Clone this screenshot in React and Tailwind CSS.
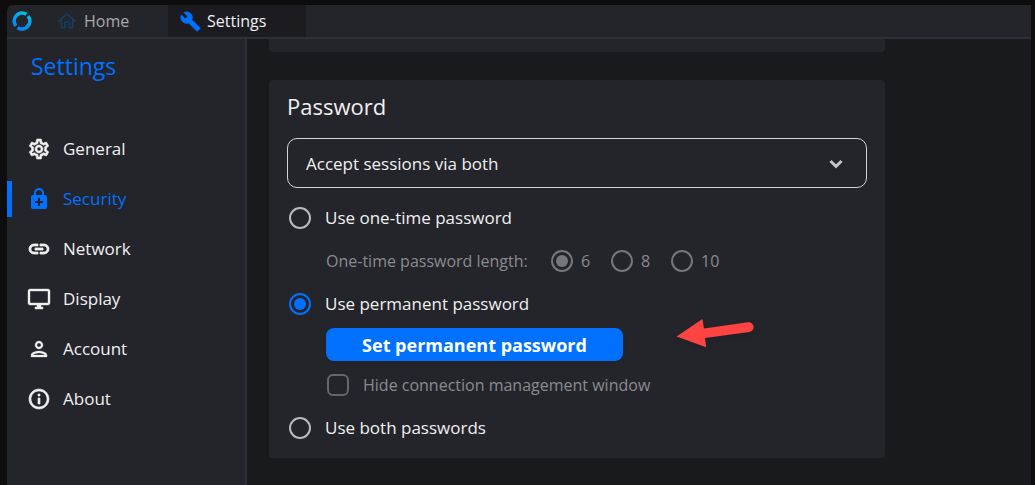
import { useState } from "react";
import {
  MdOutlineSettings,
  MdEnhancedEncryption,
  MdLink,
  MdOutlineDesktopWindows,
  MdOutlinePerson,
  MdInfoOutline,
  MdBuild,
} from "react-icons/md";

const sections = [
  { name: "General", Icon: MdOutlineSettings, weight: "stroke-[0.6]" },
  { name: "Security", Icon: MdEnhancedEncryption, weight: "stroke-0" },
  { name: "Network", Icon: MdLink, weight: "stroke-[0.8]" },
  { name: "Display", Icon: MdOutlineDesktopWindows, weight: "stroke-[0.4]" },
  { name: "Account", Icon: MdOutlinePerson, weight: "stroke-[0.3]" },
  { name: "About", Icon: MdInfoOutline, weight: "stroke-[0.6]" },
];

function Logo() {
  return (
    <svg viewBox="0 0 20 20" className="size-5" fill="none" aria-hidden="true">
      <defs>
        <linearGradient id="logo" x1="14" y1="2" x2="6" y2="18" gradientUnits="userSpaceOnUse">
          <stop stopColor="#00bfe1" />
          <stop offset="1" stopColor="#0083ff" />
        </linearGradient>
      </defs>
      <path d="M3.900 14.800A7.900 7.900 0 0 1 14.400 3.300" stroke="url(#logo)" strokeWidth="3.600" />
      <path d="M16.100 5.200A7.900 7.900 0 0 1 5.600 16.700" stroke="url(#logo)" strokeWidth="3.600" />
    </svg>
  );
}

function HomeIcon() {
  return (
    <svg viewBox="0 0 18 18" className="size-[18px]" fill="none" stroke="#173d63" strokeWidth="1.600" aria-hidden="true">
      <path d="M1 9.200 9 1.900l8 7.300M3.400 7.500v8.300h3.400v-4a2.200 2.200 0 0 1 4.400 0v4h3.400V7.500" strokeLinejoin="round" strokeLinecap="round" />
    </svg>
  );
}

function Radio(props) {
  return (
    <input
      type="radio"
      className="size-[22px] shrink-0 appearance-none rounded-full border-2 border-[#bababc] bg-clip-content p-[3px] checked:border-[#0071ff] checked:bg-[#0071ff] disabled:border-[#77777b] disabled:checked:bg-[#77777b]"
      {...props}
    />
  );
}

export default function App() {
  const [section, setSection] = useState("Security");
  const [mode, setMode] = useState("permanent");

  return (
    <div className="flex min-h-screen flex-col bg-[#0d0d0d] pt-[5px] pr-1 pl-[7px] font-['Open_Sans','Noto_Sans',sans-serif] text-[17px] leading-6 text-[#f0f0f1]">
      <header className="flex h-[34px] items-stretch rounded-tl-md border-b-2 border-[#2f3036] bg-[#24252b]">
        <div className="flex w-10 items-center pl-[5px]">
          <Logo />
        </div>
        <nav className="flex text-base">
          <a href="#home" className="flex w-[121px] items-center gap-2 pl-[11px] text-[#a9a9ab]">
            <HomeIcon />
            Home
          </a>
          <a href="#settings" className="flex w-[138px] items-center gap-1.5 bg-[#1c1b20] pl-3">
            <MdBuild className="size-[21px] stroke-1 text-[#0071ff] [&>[fill=none]]:hidden" />
            Settings
          </a>
        </nav>
      </header>

      <div className="flex grow">
        <aside className="w-60 shrink-0 border-r-2 border-[#2f3036] bg-[#24252b]">
          <h1 className="pt-[11px] pl-6 text-[23px] leading-8 text-[#0071ff]">Settings</h1>
          <nav className="mt-[42px]">
            {sections.map(({ name, Icon, weight }) => {
              const active = name === section;
              return (
                <button
                  key={name}
                  type="button"
                  onClick={() => setSection(name)}
                  className={"flex h-[50px] w-full items-center gap-[15px] " + (active ? "text-[#0071ff]" : "")}
                >
                  <span className={"h-9 w-[5px] " + (active ? "bg-[#0071ff]" : "")} />
                  <span className="flex items-center gap-3">
                    <Icon className={"size-6 [&>[fill=none]]:hidden " + weight} />
                    {name}
                  </span>
                </button>
              );
            })}
          </nav>
        </aside>

        <main className="grow bg-[#191a1e] pr-[146px] pl-[22px]">
          <section className="h-[13px] rounded-b bg-[#24252b]" />

          <section className="relative mt-7 rounded bg-[#24252b] px-[18px] pt-2.5 pb-2">
            <h2 className="text-[22px] leading-8">Password</h2>
            <div className="relative mt-4">
              <select
                aria-label="Password access"
                className="block h-[50px] w-full appearance-none rounded-[10px] border border-[#d4d4d5] bg-transparent pt-0.5 pl-[18px]"
              >
                <option>Accept sessions via both</option>
              </select>
              <svg viewBox="0 0 14 10" className="pointer-events-none absolute top-[21px] right-6 h-2.5 w-3.5" fill="none" stroke="#c4c4c6" strokeWidth="3" aria-hidden="true">
                <path d="m1.500 2 5.500 5.400L12.500 2" />
              </svg>
            </div>

            <div className="mt-2">
              <label className="flex h-[43px] items-center gap-3.5 pl-0.5">
                <Radio name="mode" checked={mode === "once"} onChange={() => setMode("once")} />
                Use one-time password
              </label>

              <fieldset disabled aria-labelledby="length-label" className="flex h-[43px] items-center pl-[39px] text-base text-[#8b8b8e]">
                <span id="length-label" className="w-[225px]">One-time password length:</span>
                {["6", "8", "10"].map((n) => (
                  <label key={n} className="flex w-[60px] items-center gap-2">
                    <Radio name="length" defaultChecked={n === "6"} />
                    {n}
                  </label>
                ))}
              </fieldset>

              <label className="flex h-[43px] items-center gap-3.5 pl-0.5">
                <Radio name="mode" checked={mode === "permanent"} onChange={() => setMode("permanent")} />
                Use permanent password
              </label>

              <div className="py-[3px] pl-[39px]">
                <button type="button" className="block h-[33px] w-[297px] rounded-lg bg-[#0071ff] text-lg font-bold text-white shadow">
                  Set permanent password
                </button>
              </div>

              <label className="flex h-[42px] items-center gap-3.5 pl-10 text-base text-[#8b8b8e]">
                <input type="checkbox" disabled className="size-[22px] appearance-none rounded-md border-2 border-[#66666a]" />
                Hide connection management window
              </label>

              <label className="mb-px flex h-[43px] items-center gap-3.5 pl-0.5">
                <Radio name="mode" checked={mode === "both"} onChange={() => setMode("both")} />
                Use both passwords
              </label>
            </div>

            <svg viewBox="0 0 84 40" className="absolute top-[234px] left-[405px] h-10 w-[84px] drop-shadow-md" aria-hidden="true">
              <path d="M2.500 22.500 28.500 5l1.400 9.500L74 8.200a4.900 4.900 0 0 1 1.400 9.700L31 24l1.200 9.200Z" fill="#fe4443" />
            </svg>
          </section>
        </main>
      </div>
    </div>
  );
}
